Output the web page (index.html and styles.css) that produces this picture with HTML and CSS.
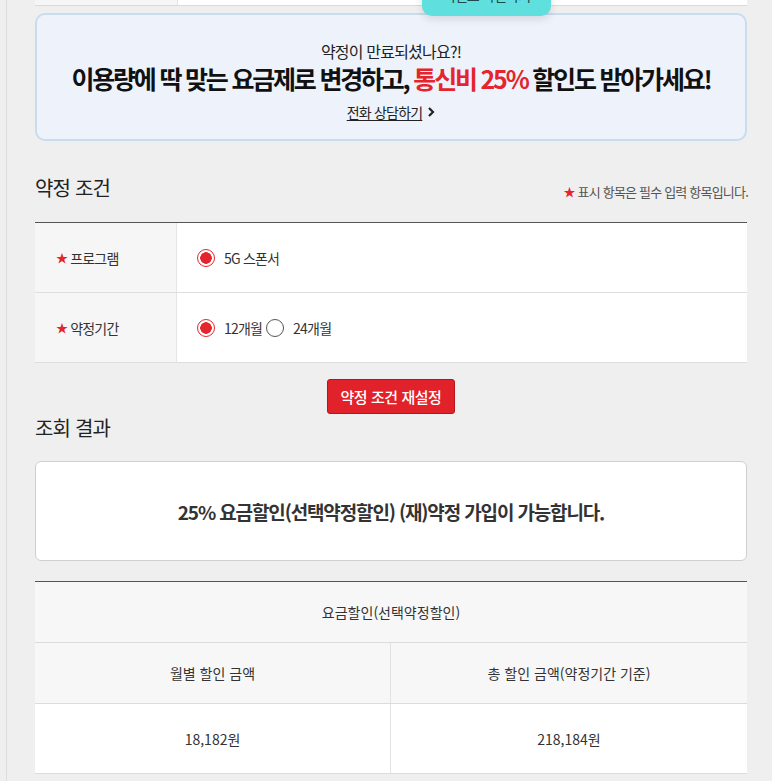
FILE: index.html
```html
<!DOCTYPE html>
<html lang="ko">
<head>
<meta charset="utf-8">
<link rel="stylesheet" href="styles.css">
</head>
<body>
<div class="page">
  <div class="prev-row">
    <div class="prev-label"></div>
    <div class="prev-value"></div>
  </div>
  <a class="float-pill" href="#">이벤트 확인하기</a>

  <div class="banner">
    <p class="banner-sub">약정이 만료되셨나요?!</p>
    <p class="banner-head">이용량에 딱 맞는 요금제로 변경하고, <span class="red">통신비 25%</span> 할인도 받아가세요!</p>
    <a class="banner-link" href="#"><span class="u">전화 상담하기</span><svg class="chev" width="8" height="12" viewBox="0 0 8 12"><path d="M2 2 L6 6 L2 10" fill="none" stroke="#222" stroke-width="2.2"/></svg></a>
  </div>

  <div class="section-head">
    <h2 class="section-title">약정 조건</h2>
    <p class="note"><span class="star">★</span> 표시 항목은 필수 입력 항목입니다.</p>
  </div>

  <div class="form-table">
    <div class="form-row">
      <div class="form-label"><span class="star">★</span> 프로그램</div>
      <div class="form-value">
        <label class="radio"><span class="dot on"></span>5G 스폰서</label>
      </div>
    </div>
    <div class="form-row">
      <div class="form-label"><span class="star">★</span> 약정기간</div>
      <div class="form-value">
        <label class="radio"><span class="dot on"></span>12개월</label>
        <label class="radio"><span class="dot"></span>24개월</label>
      </div>
    </div>
  </div>

  <div class="btn-wrap">
    <button class="btn-red" type="button">약정 조건 재설정</button>
  </div>

  <h2 class="section-title result-title">조회 결과</h2>

  <div class="result-box">25% 요금할인(선택약정할인) (재)약정 가입이 가능합니다.</div>

  <div class="amount-table">
    <div class="amt-head">요금할인(선택약정할인)</div>
    <div class="amt-row amt-sub">
      <div class="amt-cell">월별 할인 금액</div>
      <div class="amt-cell">총 할인 금액(약정기간 기준)</div>
    </div>
    <div class="amt-row amt-val">
      <div class="amt-cell">18,182원</div>
      <div class="amt-cell">218,184원</div>
    </div>
  </div>
</div>
</body>
</html>
```

FILE: styles.css
```css
* { box-sizing: border-box; }
html, body { margin: 0; padding: 0; }
body {
  background: #efefef;
  font-family: "Noto Sans CJK KR", "Noto Sans", sans-serif;
  color: #222;
  letter-spacing: -0.05em;
}
p, h2 { margin: 0; }

.page {
  position: relative;
  margin-left: 6px;
  border-left: 1px solid #dcdcdc;
  padding: 0 25px 20px 28px;
  min-height: 781px;
}

.prev-row {
  display: flex;
  height: 6px;
  border-bottom: 1px solid #dadada;
}
.prev-label { width: 143px; background: #f6f6f6; border-right: 1px solid #e3e3e3; }
.prev-value { flex: 1; background: #fff; }

.float-pill {
  position: absolute;
  left: 415px;
  top: -24px;
  width: 129px;
  height: 40px;
  padding-top: 12px;
  background: #5fe0de;
  border-radius: 0 0 10px 10px;
  box-shadow: 0 3px 8px rgba(0,0,0,0.12);
  color: #1d4b4a;
  font-size: 14px;
  text-align: center;
  text-decoration: none;
  line-height: 14px;
}

.banner {
  margin-top: 7px;
  background: #eef3fb;
  border: 2px solid #c8dbef;
  border-radius: 10px;
  padding: 25px 0 16px;
  text-align: center;
}
.banner-sub {
  font-size: 16px;
  line-height: 22px;
  color: #222;
}
.banner-head {
  font-size: 25px;
  line-height: 32px;
  font-weight: 700;
  color: #111;
  letter-spacing: -0.088em;
}
.banner-head .red { color: #e4252c; }
.banner-link {
  display: inline-flex;
  align-items: center;
  gap: 5px;
  margin-top: 8px;
  height: 20px;
  font-size: 14px;
  color: #222;
  text-decoration: none;
}
.banner-link .u { text-decoration: underline; text-underline-offset: 2px; }

.section-head {
  display: flex;
  justify-content: space-between;
  align-items: flex-end;
  margin-top: 35px;
}
.section-title {
  font-size: 20px;
  line-height: 24px;
  font-weight: 400;
  color: #222;
  letter-spacing: -0.04em;
}
.note {
  font-size: 13px;
  line-height: 16px;
  color: #555;
  margin-right: -1px;
}
.star { color: #e4252c; font-size: 12px; }

.form-table {
  margin-top: 22px;
  border-top: 1px solid #555;
  background: #fff;
}
.form-row {
  display: flex;
  height: 70px;
  border-bottom: 1px solid #dedede;
}
.form-label {
  width: 142px;
  flex: none;
  background: #f6f6f6;
  border-right: 1px solid #e6e6e6;
  display: flex;
  align-items: center;
  padding-left: 21px;
  font-size: 14px;
  color: #333;
}
.form-label .star { margin-right: 3px; }
.form-value {
  flex: 1;
  display: flex;
  align-items: center;
  padding-left: 20px;
  font-size: 14px;
  color: #333;
}
.radio {
  display: inline-flex;
  align-items: center;
  gap: 9px;
}
.radio + .radio { margin-left: 4px; }
.dot {
  width: 18px;
  height: 18px;
  border-radius: 50%;
  border: 1px solid #555;
  background: #fff;
  flex: none;
}
.dot.on {
  border-color: #e4252c;
  background: radial-gradient(circle, #e4252c 0 5.5px, #fff 6px);
}

.btn-wrap {
  display: flex;
  justify-content: center;
  margin-top: 16px;
}
.btn-red {
  width: 128px;
  height: 35px;
  background: #e2222a;
  border: 1px solid #b8141b;
  border-radius: 3px;
  color: #fff;
  font-family: inherit;
  font-size: 15px;
  font-weight: 500;
  letter-spacing: -0.03em;
}

.result-title { margin-top: 2px; }

.result-box {
  margin-top: 21px;
  height: 100px;
  background: #fff;
  border: 1px solid #cfcfcf;
  border-radius: 6px;
  display: flex;
  align-items: center;
  justify-content: center;
  font-size: 19px;
  font-weight: 700;
  color: #333;
  letter-spacing: -0.06em;
}

.amount-table {
  margin-top: 20px;
  border-top: 1px solid #555;
  font-size: 14px;
  color: #333;
  text-align: center;
  letter-spacing: 0;
}
.amt-head {
  height: 61px;
  line-height: 60px;
  background: #f7f7f7;
  border-bottom: 1px solid #dcdcdc;
}
.amt-row {
  display: flex;
  border-bottom: 1px solid #dcdcdc;
}
.amt-sub { height: 61px; background: #f7f7f7; }
.amt-val { height: 70px; background: #fff; }
.amt-cell {
  flex: 1;
  display: flex;
  align-items: center;
  justify-content: center;
}
.amt-cell:first-child { flex: none; width: 356px; border-right: 1px solid #e3e3e3; }
```
